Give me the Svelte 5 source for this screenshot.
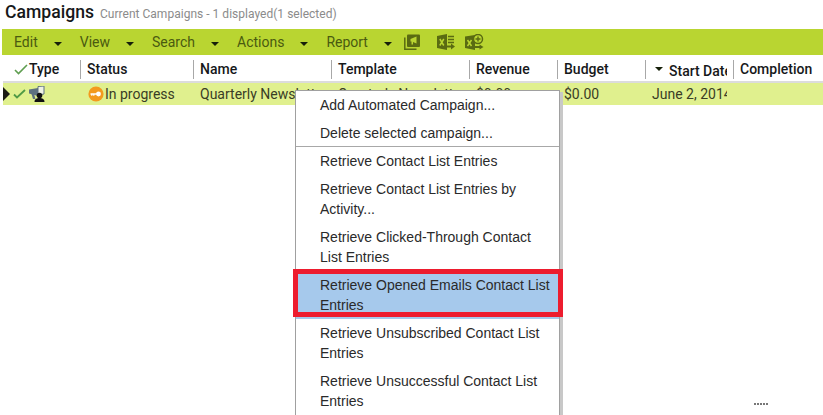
<script>
  const menus = ['Edit', 'View', 'Search', 'Actions', 'Report'];
  const cols = [
    { label: 'Type', w: 80, cls: 'type' },
    { label: 'Status', w: 113 },
    { label: 'Name', w: 138 },
    { label: 'Template', w: 138 },
    { label: 'Revenue', w: 88 },
    { label: 'Budget', w: 88 },
    { label: 'Start Date', w: 88, cls: 'start' },
    { label: 'Completion', w: 88 }
  ];
  const items = [
    { t: 'Add Automated Campaign...' },
    { t: 'Delete selected campaign...', sep: true },
    { t: 'Retrieve Contact List Entries' },
    { t: 'Retrieve Contact List Entries by Activity...' },
    { t: 'Retrieve Clicked-Through Contact List Entries' },
    { t: 'Retrieve Opened Emails Contact List Entries', hi: true },
    { t: 'Retrieve Unsubscribed Contact List Entries' },
    { t: 'Retrieve Unsuccessful Contact List Entries' }
  ];
</script>

<div class="page">
  <header class="title">
    <h1>Campaigns</h1>
    <span class="sub">Current Campaigns - 1 displayed(1 selected)</span>
  </header>

  <nav class="toolbar">
    {#each menus as m}
      <span class="menu">{m}<i class="caret"></i></span>
    {/each}
    <svg class="tool first" width="16" height="16" viewBox="0 0 16 16">
      <path d="M0.800 3.500v11.700h11.700" fill="none" stroke="#5a6b12" stroke-width="1.500"/>
      <rect x="3" y="0.500" width="13" height="12.500" rx="1" fill="#5a6b12"/>
      <path d="M6.500 5l6-2.500v7L9 8v2.500H7.500V7.500h-1z" fill="#b9d531"/>
    </svg>
    <svg class="tool second" width="18" height="16" viewBox="0 0 18 16">
      <path d="M0 2l10-2v16l-10-2z" fill="#5a6b12"/>
      <path d="M2.800 5l4 6.500M6.800 5l-4 6.500" stroke="#b9d531" stroke-width="1.500"/>
      <path d="M11 2.500h6M11 5.500h6M11 8.500h6" stroke="#5a6b12" stroke-width="1.700"/>
      <path d="M9 12.500h6" stroke="#5a6b12" stroke-width="2"/><path d="M14 9.500l4 3-4 3z" fill="#5a6b12"/>
    </svg>
    <svg class="tool" width="19" height="16" viewBox="0 0 19 16">
      <path d="M0 2.500l10-1.500v15l-10-2z" fill="#5a6b12"/>
      <path d="M2.500 6l4 6M6.500 6l-4 6" stroke="#b9d531" stroke-width="1.500"/>
      <circle cx="13" cy="5" r="4.500" fill="#b9d531" stroke="#5a6b12" stroke-width="1.500"/>
      <path d="M13 2.500v5M10.500 5h5" stroke="#5a6b12" stroke-width="1.400"/>
      <path d="M10 13h5" stroke="#5a6b12" stroke-width="2"/><path d="M14.500 10.500l4 2.500-4 2.500z" fill="#5a6b12"/>
    </svg>
  </nav>

  <div class="heads">
    {#each cols as c}
      <div class="head {c.cls ?? ''}" style="width:{c.w}px">
        {#if c.cls === 'type'}
          <svg class="check" width="14" height="11" viewBox="0 0 14 11"><path d="M1 6l3.500 3.500L13 1" fill="none" stroke="#5f9e50" stroke-width="1.600"/></svg>
        {/if}
        {#if c.cls === 'start'}<i class="caret dark"></i>{/if}
        <span>{c.label}</span>
      </div>
    {/each}
  </div>

  <div class="row">
    <i class="arrow"></i>
    <svg class="rowcheck" width="13" height="10" viewBox="0 0 13 10"><path d="M1 5.500l3 3L12 1" fill="none" stroke="#4f9a45" stroke-width="1.800"/></svg>
    <svg class="campaign" width="16" height="16" viewBox="0 0 16 16">
      <path d="M0 3.500l9-1.500v8L0 7.500z" fill="#5d7180"/>
      <path d="M9 0.500l6-0.500v8l-6 1z" fill="#eef2e4" stroke="#5d7180"/>
      <path d="M2.500 8l1.500 5h2.500l-1.500-5z" fill="#5d7180"/>
      <circle cx="10.500" cy="9.500" r="2.800" fill="#111"/>
      <path d="M5.500 16c0-3 2.200-4 5-4s5 1 5 4z" fill="#111"/>
    </svg>
    <div class="status">
      <svg width="16" height="16" viewBox="0 0 16 16">
        <circle cx="8" cy="8" r="7.600" fill="#f39a1e"/>
        <circle cx="10.500" cy="8" r="2.400" fill="#fff"/>
        <path d="M2.500 8h7M3.800 8v1.800M5.800 8v1.800" stroke="#fff" stroke-width="1.300"/>
      </svg>
      <span>In progress</span>
    </div>
    <span class="cell name">Quarterly Newsletter</span>
    <span class="cell template">Quarterly Newsletter</span>
    <span class="cell revenue">$0.00</span>
    <span class="cell budget">$0.00</span>
    <span class="cell date">June 2, 2014</span>
  </div>

  <ul class="context">
    {#each items as it}
      <li class:hi={it.hi} class:sep={it.sep}>{it.t}</li>
    {/each}
  </ul>

  <div class="grip"></div>
</div>

<style>
  :global(body) { margin: 0; background: #fff; }
  .page {
    position: relative;
    width: 823px;
    height: 415px;
    overflow: hidden;
    font-family: Roboto, sans-serif;
    color: #3a3d26;
    font-size: 14px;
  }
  .title { display: flex; align-items: baseline; gap: 6px; height: 29px; padding: 1px 0 0 5px; box-sizing: border-box; }
  h1 { margin: 0; font-size: 17.600px; font-weight: 500; color: #16181a; line-height: 22px; }
  .sub { font-size: 12px; color: #8b8b8b; letter-spacing: 0.020px; }
  .toolbar {
    display: flex;
    align-items: center;
    height: 26px;
    margin-left: 2px;
    background: #b9d531;
    padding-left: 12px;
    color: #4a5a10;
  }
  .menu { display: inline-flex; align-items: center; margin-right: 18px; }
  .caret {
    display: inline-block;
    width: 0; height: 0;
    margin-left: 16px;
    margin-top: 3px;
    border-left: 4px solid transparent;
    border-right: 4px solid transparent;
    border-top: 4px solid #16200a;
  }
  .tool { margin-right: 10px; flex: none; }
  .tool.first { margin-left: -6px; margin-right: 17px; }
  .heads { display: flex; height: 26px; padding: 2px 0 0 1px; align-items: center; box-sizing: border-box; }
  .head {
    box-sizing: border-box;
    height: 19px;
    display: flex;
    align-items: center;
    padding-left: 6px;
    border-right: 1px solid #a8a8a8;
    color: #16181a;
    font-weight: 500;
    font-size: 14px;
    overflow: hidden;
    white-space: nowrap;
    flex: none;
  }
  .head.type { padding-left: 13px; }
  .head.start { padding-right: 6px; padding-top: 3px; }
  .head.start span { overflow: hidden; }
  .head:last-child { border-right: 0; }
  .check { margin-right: 1px; flex: none; }
  .caret.dark { margin: -3px 6px 0 3px; flex: none; }
  .row {
    display: flex;
    align-items: center;
    height: 22px;
    margin-left: 3px;
    background: #e0f08e;
    border-top: 2px solid #dcdcdc;
    white-space: nowrap;
  }
  .arrow {
    width: 0; height: 0;
    border-top: 7px solid transparent;
    border-bottom: 7px solid transparent;
    border-left: 7px solid #1b1b14;
    flex: none;
  }
  .rowcheck { margin-left: 3px; flex: none; }
  .campaign { margin-left: 3px; flex: none; }
  .status { display: flex; align-items: center; gap: 1px; margin-left: 43px; width: 112px; flex: none; }
  .cell { flex: none; overflow: hidden; }
  .name { width: 138px; }
  .template { width: 138px; }
  .revenue { width: 88px; }
  .budget { width: 88px; }
  .date { width: 75px; }
  .context {
    position: absolute;
    left: 295px;
    top: 90px;
    width: 265px;
    height: 340px;
    margin: 0;
    padding: 0;
    list-style: none;
    background: #fff;
    border: 1px solid #a0a0a0;
    box-shadow: 3px 2px 0 0 #c8c8c8;
    font-family: "Liberation Sans", Arial, sans-serif;
    font-size: 14px;
    line-height: 20px;
    color: #2a2a2a;
    box-sizing: border-box;
  }
  .context li { padding: 4px 8px 4px 24px; position: relative; }
  .context li.sep::after {
    content: '';
    position: absolute;
    left: 0;
    right: 0;
    bottom: 0;
    height: 1px;
    background: #a8a8a8;
  }
  .context li.hi { background: #a6c9ec; }
  .context li.hi::after {
    content: '';
    position: absolute;
    left: -3px;
    right: -4px;
    top: -2px;
    height: 48px;
    border: 5px solid #ed1c2e;
    box-sizing: border-box;
  }
  .grip {
    position: absolute;
    left: 754px;
    top: 403px;
    width: 14px;
    height: 2px;
    background: repeating-linear-gradient(90deg, #777 0 2px, transparent 2px 3px);
  }
</style>
